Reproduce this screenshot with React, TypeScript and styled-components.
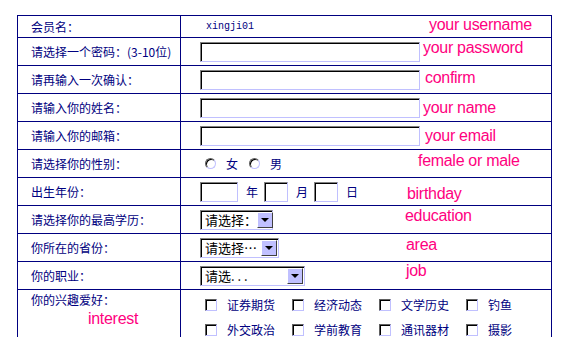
import styled, { createGlobalStyle } from "styled-components";

const GlobalStyle = createGlobalStyle`
  body {
    margin: 0;
    background: #ffffff;
    font-family: "Noto Sans CJK SC", "Liberation Sans", sans-serif;
  }
`;

const NAVY = "#000080";
const PINK = "#ff0080";

const Page = styled.div`
  padding: 15px 0 0 17px;
`;

const FormTable = styled.div`
  width: 533px;
  border: 1px solid ${NAVY};
  border-bottom: none;
`;

const Row = styled.div<{ $h: number }>`
  display: grid;
  grid-template-columns: 163px 1fr;
  min-height: ${(p) => p.$h}px;
  box-sizing: border-box;
  border-bottom: 1px solid ${NAVY};
`;

const LabelCell = styled.div<{ $top?: boolean }>`
  box-sizing: border-box;
  border-right: 1px solid ${NAVY};
  padding: ${(p) => (p.$top ? "3px 0 0 13px" : "0 0 0 13px")};
  display: flex;
  flex-direction: column;
  justify-content: ${(p) => (p.$top ? "flex-start" : "center")};
  font-size: 12px;
  line-height: 14px;
  color: ${NAVY};
  white-space: nowrap;
`;

const ValueCell = styled.div<{ $top?: boolean }>`
  display: grid;
  grid-template-columns: 224px 1fr;
  align-items: ${(p) => (p.$top ? "start" : "center")};
  padding-left: 19px;
`;

const Hint = styled.span<{ $x: number; $y: number }>`
  align-self: start;
  margin-left: ${(p) => p.$x}px;
  margin-top: ${(p) => p.$y}px;
  font-family: "Liberation Sans", Arial, sans-serif;
  font-size: 16px;
  line-height: 18px;
  letter-spacing: -0.3px;
  color: ${PINK};
  white-space: nowrap;
`;

const UserName = styled.span`
  margin-left: 6px;
  font-family: "Liberation Mono", monospace;
  font-size: 10px;
  color: ${NAVY};
`;

const TextInput = styled.input<{ $w: number }>`
  width: ${(p) => p.$w}px;
  height: 20px;
  box-sizing: border-box;
  margin: 0;
  padding: 0 3px;
  border: 1px solid;
  border-color: #808080 #c0c0ff #c0c0ff #808080;
  box-shadow: inset 1px 1px 0 #000000;
  background: #ffffff;
  outline: none;
`;

const Inline = styled.div`
  display: flex;
  align-items: center;
`;

const SmallText = styled.span`
  font-size: 12px;
  color: ${NAVY};
`;

const DateUnit = styled(SmallText)`
  margin: 0 6px 0 8px;
`;

const RadioGroup = styled(Inline)`
  padding-left: 5px;
  gap: 11px;
`;

const RadioOption = styled.label`
  display: flex;
  align-items: center;
  gap: 10px;
`;

const Radio = styled.span`
  width: 11px;
  height: 11px;
  box-sizing: border-box;
  border-radius: 50%;
  border: 1px solid;
  border-color: #606060 #c0c0ff #c0c0ff #606060;
  box-shadow: inset 1px 1px 0 #000000;
  background: #ffffff;
`;

const SelectBox = styled.div<{ $w: number }>`
  width: ${(p) => p.$w}px;
  height: 20px;
  box-sizing: border-box;
  display: flex;
  align-items: center;
  border: 1px solid;
  border-color: #808080 #c0c0ff #c0c0ff #808080;
  box-shadow: inset 1px 1px 0 #000000;
  background: #ffffff;
  padding: 0 1px 0 4px;
`;

const SelectText = styled.span`
  flex: 1;
  font-size: 13px;
  line-height: 17px;
  color: #000000;
  white-space: nowrap;
`;

const ArrowButton = styled.span`
  width: 16px;
  height: 16px;
  flex: none;
  box-sizing: border-box;
  display: flex;
  align-items: center;
  justify-content: center;
  background: #c0c0ff;
  border: 1px solid;
  border-color: #ffffff #404040 #404040 #ffffff;

  &::after {
    content: "";
    border-left: 4px solid transparent;
    border-right: 4px solid transparent;
    border-top: 4px solid #000000;
    margin-top: 1px;
  }
`;

const InterestGrid = styled.div`
  grid-column: 1 / -1;
  display: grid;
  grid-template-columns: repeat(4, 87px);
  grid-auto-rows: 25px;
  align-items: center;
  padding: 2px 0 12px 5px;
`;

const CheckItem = styled.label`
  display: flex;
  align-items: center;
  gap: 10px;
  font-size: 12px;
  color: ${NAVY};
`;

const CheckBox = styled.span`
  width: 12px;
  height: 12px;
  box-sizing: border-box;
  border: 1px solid;
  border-color: #606060 #c0c0ff #c0c0ff #606060;
  box-shadow: inset 1px 1px 0 #000000;
  background: #ffffff;
`;

const LabelHint = styled(Hint)`
  margin-top: 3px;
`;

const Select = ({ text, w }: { text: string; w: number }) => (
  <SelectBox $w={w}>
    <SelectText>{text}</SelectText>
    <ArrowButton />
  </SelectBox>
);

const interests = [
  "证券期货",
  "经济动态",
  "文学历史",
  "钓鱼",
  "外交政治",
  "学前教育",
  "通讯器材",
  "摄影",
];

const App = () => {
  return (
    <>
      <GlobalStyle />
      <Page>
        <FormTable>
          <Row $h={22}>
            <LabelCell>会员名：</LabelCell>
            <ValueCell>
              <UserName>xingji01</UserName>
              <Hint $x={5} $y={0}>your username</Hint>
            </ValueCell>
          </Row>
          <Row $h={28}>
            <LabelCell>请选择一个密码：(3-10位)</LabelCell>
            <ValueCell>
              <TextInput type="password" $w={220} />
              <Hint $x={-1} $y={1}>your password</Hint>
            </ValueCell>
          </Row>
          <Row $h={28}>
            <LabelCell>请再输入一次确认：</LabelCell>
            <ValueCell>
              <TextInput type="password" $w={220} />
              <Hint $x={1} $y={3}>confirm</Hint>
            </ValueCell>
          </Row>
          <Row $h={28}>
            <LabelCell>请输入你的姓名：</LabelCell>
            <ValueCell>
              <TextInput $w={220} />
              <Hint $x={-1} $y={5}>your name</Hint>
            </ValueCell>
          </Row>
          <Row $h={28}>
            <LabelCell>请输入你的邮箱：</LabelCell>
            <ValueCell>
              <TextInput $w={220} />
              <Hint $x={1} $y={5}>your email</Hint>
            </ValueCell>
          </Row>
          <Row $h={28}>
            <LabelCell>请选择你的性别：</LabelCell>
            <ValueCell>
              <RadioGroup>
                <RadioOption>
                  <Radio />
                  <SmallText>女</SmallText>
                </RadioOption>
                <RadioOption>
                  <Radio />
                  <SmallText>男</SmallText>
                </RadioOption>
              </RadioGroup>
              <Hint $x={-6} $y={2}>female or male</Hint>
            </ValueCell>
          </Row>
          <Row $h={28}>
            <LabelCell>出生年份：</LabelCell>
            <ValueCell>
              <Inline>
                <TextInput $w={38} />
                <DateUnit>年</DateUnit>
                <TextInput $w={24} />
                <DateUnit>月</DateUnit>
                <TextInput $w={24} />
                <DateUnit>日</DateUnit>
              </Inline>
              <Hint $x={-17} $y={7}>birthday</Hint>
            </ValueCell>
          </Row>
          <Row $h={28}>
            <LabelCell>请选择你的最高学历：</LabelCell>
            <ValueCell>
              <Select text="请选择：" w={73} />
              <Hint $x={-19} $y={1}>education</Hint>
            </ValueCell>
          </Row>
          <Row $h={28}>
            <LabelCell>你所在的省份：</LabelCell>
            <ValueCell>
              <Select text="请选择…" w={79} />
              <Hint $x={-18} $y={2}>area</Hint>
            </ValueCell>
          </Row>
          <Row $h={28}>
            <LabelCell>你的职业：</LabelCell>
            <ValueCell>
              <Select text="请选. . ." w={105} />
              <Hint $x={-18} $y={0}>job</Hint>
            </ValueCell>
          </Row>
          <Row $h={90}>
            <LabelCell $top>
              你的兴趣爱好：
              <LabelHint $x={57} $y={0}>interest</LabelHint>
            </LabelCell>
            <ValueCell $top>
              <InterestGrid>
                {interests.map((item) => (
                  <CheckItem key={item}>
                    <CheckBox />
                    {item}
                  </CheckItem>
                ))}
              </InterestGrid>
            </ValueCell>
          </Row>
        </FormTable>
      </Page>
    </>
  );
};

export default App;
